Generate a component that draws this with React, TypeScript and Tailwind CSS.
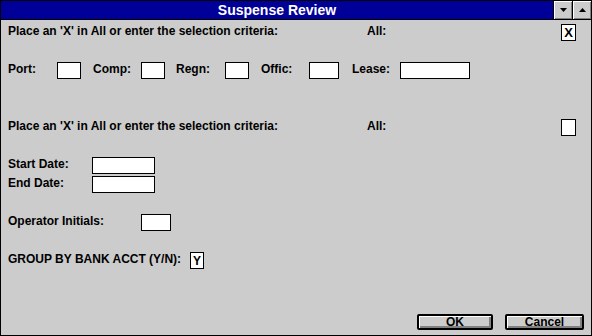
import React from "react";

const box = "bg-white border border-black h-[17px] shrink-0";
const label = "leading-[14px] shrink-0 whitespace-nowrap";

function Arrow({ up }: { up?: boolean }) {
  return (
    <svg width="7" height="4" viewBox="0 0 7 4">
      <polygon points={up ? "3.5,0 7,4 0,4" : "0,0 7,0 3.5,4"} fill="#000" />
    </svg>
  );
}

function TitleButton({ up }: { up?: boolean }) {
  return (
    <div className="w-[19px] h-full border-l border-black bg-[#cccccc] shadow-[inset_1px_1px_0_#ffffff,inset_-1px_-1px_0_#808080] flex items-center justify-center">
      <Arrow up={up} />
    </div>
  );
}

function Button({ text, w }: { text: string; w: string }) {
  return (
    <div
      className={`${w} h-[16px] border-2 border-black rounded-[2px] bg-[#cccccc] shadow-[inset_1px_1px_0_#ffffff,inset_-2px_-2px_0_#808080] flex items-center justify-center leading-[12px]`}
    >
      {text}
    </div>
  );
}

export default function App() {
  return (
    <div
      className="w-[592px] h-[336px] border border-black bg-[#cccccc] flex flex-col text-[12px] font-bold text-black"
      style={{ fontFamily: '"Liberation Sans", Arial, sans-serif' }}
    >
      {/* title bar */}
      <div className="h-[19px] border-b border-black flex shrink-0">
        <div className="flex-1 bg-[#000099] text-white text-[14px] leading-[18px] text-center">
          Suspense Review
        </div>
        <TitleButton />
        <TitleButton up />
      </div>

      <div className="flex-1 flex flex-col pl-[7px]">
        {/* first criteria */}
        <div className="flex items-start mt-[4px] pr-[15px]">
          <span className={`${label} w-[359px]`}>Place an 'X' in All or enter the selection criteria:</span>
          <span className={`${label} flex-1`}>All:</span>
          <div className={`${box} w-[15px] flex items-center justify-center text-[13px] leading-none`}>X</div>
        </div>

        <div className="flex items-start mt-[21px]">
          <span className={`${label} w-[49px]`}>Port:</span>
          <div className={`${box} w-[24px]`} />
          <span className={`${label} w-[48px] ml-[12px]`}>Comp:</span>
          <div className={`${box} w-[24px]`} />
          <span className={`${label} w-[49px] ml-[11px]`}>Regn:</span>
          <div className={`${box} w-[24px]`} />
          <span className={`${label} w-[48px] ml-[12px]`}>Offic:</span>
          <div className={`${box} w-[30px]`} />
          <span className={`${label} w-[48px] ml-[13px]`}>Lease:</span>
          <div className={`${box} w-[70px]`} />
        </div>

        {/* second criteria */}
        <div className="flex items-start mt-[40px] pr-[15px]">
          <span className={`${label} w-[359px]`}>Place an 'X' in All or enter the selection criteria:</span>
          <span className={`${label} flex-1`}>All:</span>
          <div className={`${box} w-[15px]`} />
        </div>

        <div className="flex items-start mt-[21px]">
          <span className={`${label} w-[84px]`}>Start Date:</span>
          <div className={`${box} w-[63px]`} />
        </div>
        <div className="flex items-start mt-[2px]">
          <span className={`${label} w-[84px]`}>End Date:</span>
          <div className={`${box} w-[63px]`} />
        </div>

        <div className="flex items-start mt-[21px]">
          <span className={`${label} w-[133px]`}>Operator Initials:</span>
          <div className={`${box} w-[30px]`} />
        </div>

        <div className="flex items-start mt-[21px]">
          <span className={`${label} w-[182px]`}>GROUP BY BANK ACCT (Y/N):</span>
          <div className={`${box} w-[14px] flex items-center justify-center leading-none`}>Y</div>
        </div>

        <div className="flex-1" />

        <div className="flex justify-end gap-[12px] pr-[7px] mb-[5px]">
          <Button text="OK" w="w-[76px]" />
          <Button text="Cancel" w="w-[79px]" />
        </div>
      </div>
    </div>
  );
}
